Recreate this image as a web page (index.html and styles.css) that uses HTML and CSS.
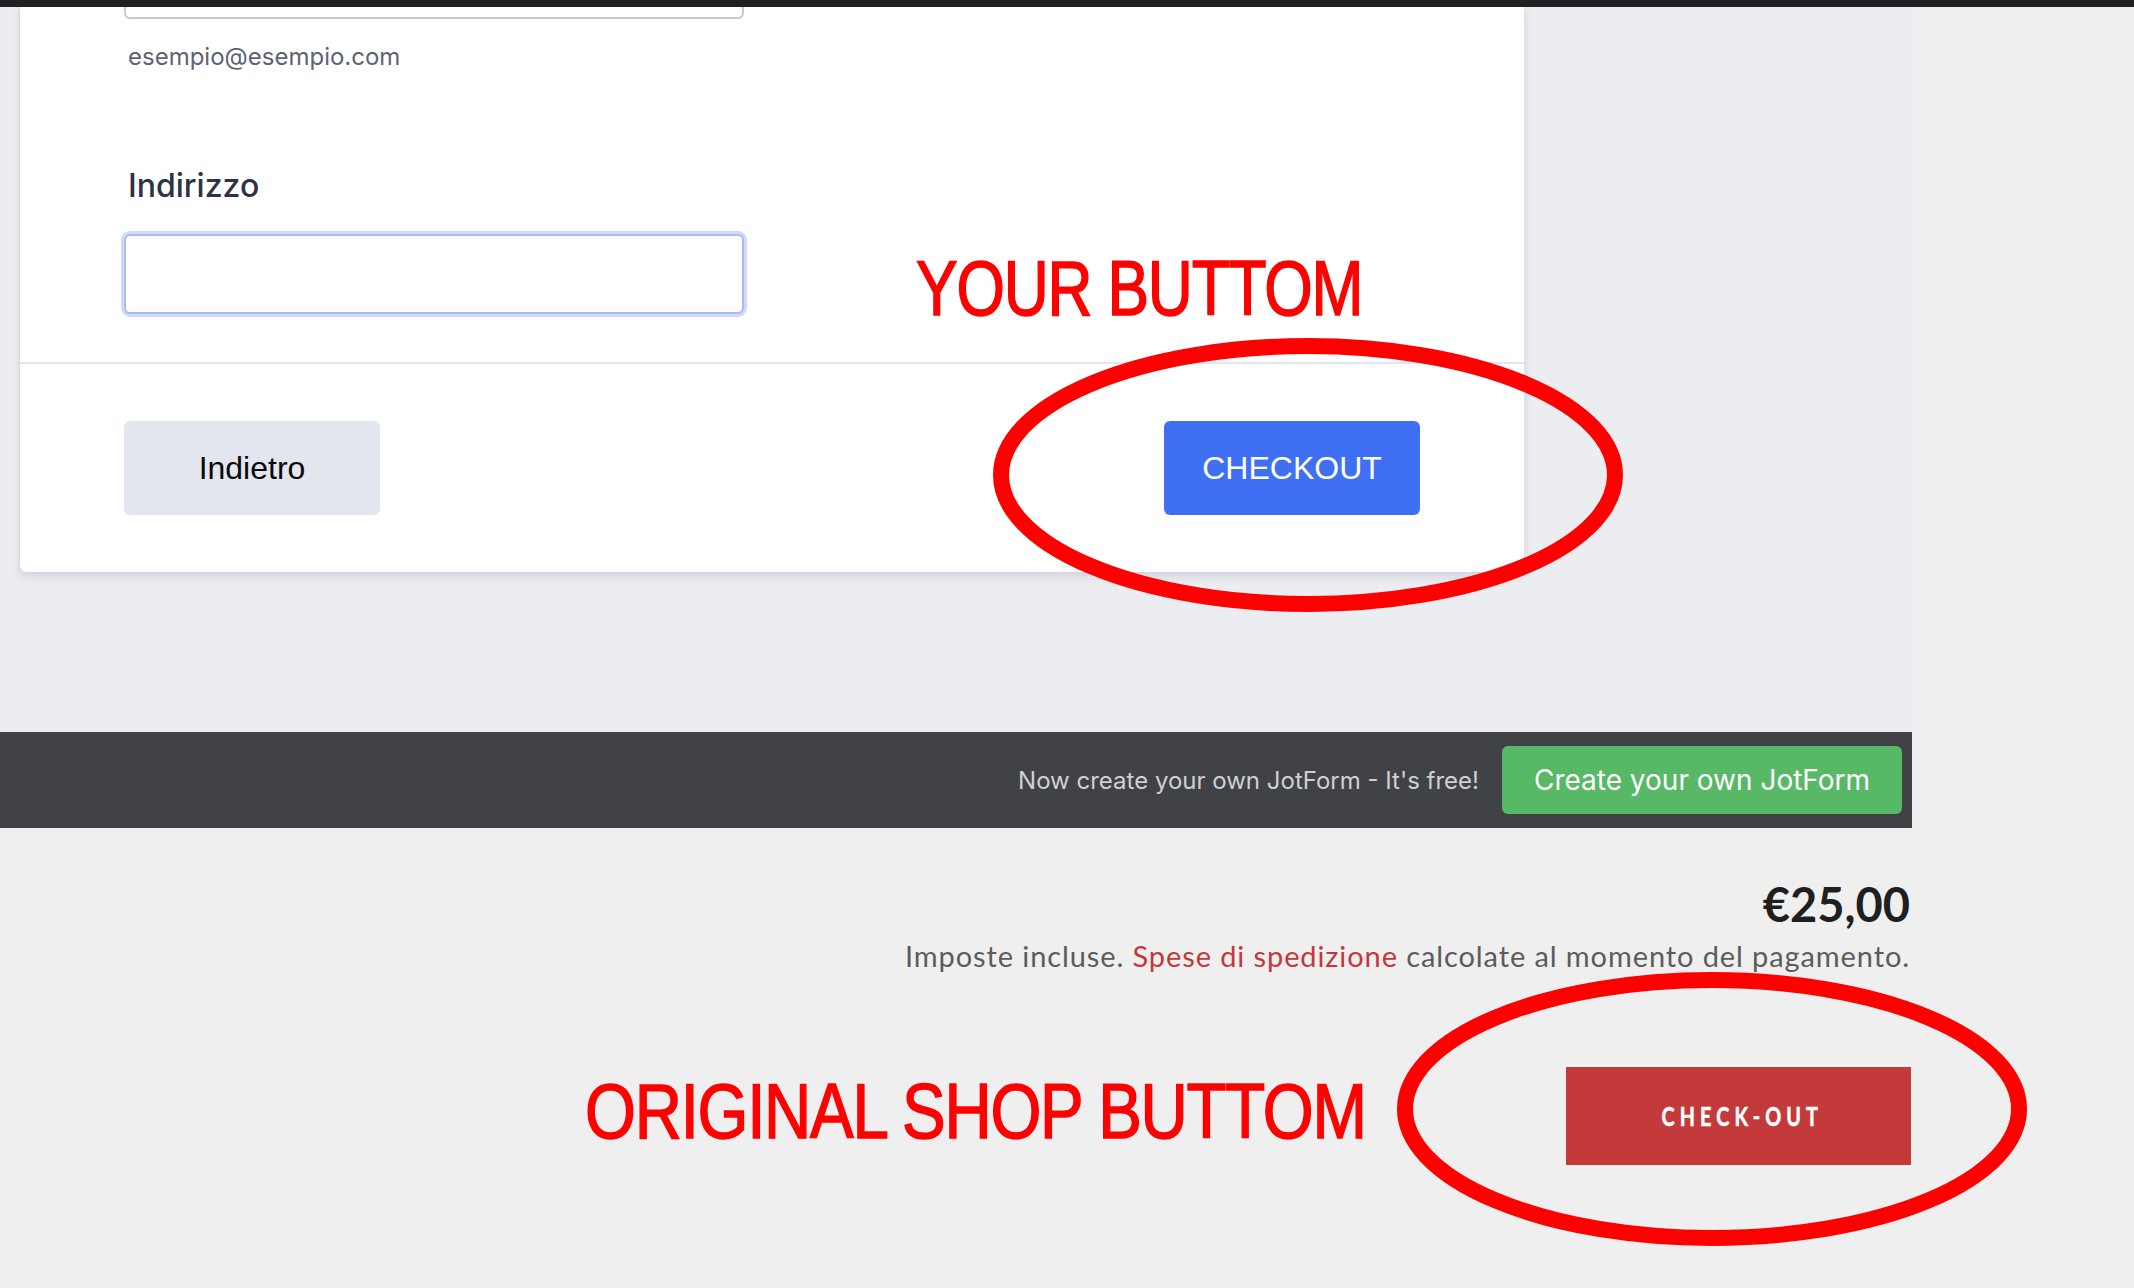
FILE: index.html
```html
<!DOCTYPE html>
<html lang="it">
<head>
<meta charset="utf-8">
<title>Checkout</title>
<link rel="stylesheet" href="styles.css">
</head>
<body>
<div class="topbar"></div>
<div class="page">
  <div class="jf">
    <div class="jf-main">
      <div class="card">
        <div class="card-body">
          <div class="input-stub"></div>
          <div class="sublabel">esempio@esempio.com</div>
          <label class="label" for="addr">Indirizzo</label>
          <input id="addr" class="field" type="text">
        </div>
        <div class="card-footer">
          <button class="btn btn-back" type="button">Indietro</button>
          <button class="btn btn-submit" type="button">CHECKOUT</button>
        </div>
      </div>
    </div>
    <div class="jf-bar">
      <span class="bar-text">Now create your own JotForm - It's free!</span>
      <a class="bar-btn">Create your own JotForm</a>
    </div>
  </div>
  <div class="shop">
    <div class="price">€25,00</div>
    <p class="tax">Imposte incluse. <a class="tax-link">Spese di spedizione</a> calcolate al momento del pagamento.</p>
    <button class="shop-btn" type="button"><span class="shop-btn-text">CHECK-OUT</span></button>
  </div>
</div>
<div class="note note-your">YOUR BUTTOM</div>
<div class="note note-orig">ORIGINAL SHOP BUTTOM</div>
<svg class="marks" width="2134" height="1288" viewBox="0 0 2134 1288" xmlns="http://www.w3.org/2000/svg">
  <ellipse cx="1308" cy="475" rx="307" ry="129" fill="none" stroke="#ff0000" stroke-width="16"/>
  <ellipse cx="1712" cy="1109" rx="307" ry="129" fill="none" stroke="#ff0000" stroke-width="16"/>
</svg>
</body>
</html>
```

FILE: styles.css
```css
html, body {
  margin: 0;
  padding: 0;
}

body {
  width: 2134px;
  height: 1288px;
  overflow: hidden;
  position: relative;
  background: #efefef;
  font-family: "Inter", "Liberation Sans", sans-serif;
}

.topbar {
  height: 7px;
  background: #212124;
}

.jf {
  width: 1912px;
  background: #ecedf1;
}

.jf-main {
  height: 725px;
  padding-left: 20px;
}

.card {
  width: 1504px;
  height: 565px;
  background: #ffffff;
  border-radius: 0 0 6px 6px;
  box-shadow: 0 4px 10px rgba(60, 70, 100, 0.16), -1px 0 2px rgba(60, 70, 100, 0.06);
}

.card-body {
  height: 355px;
  padding: 0 104px;
  border-bottom: 2px solid #e4e6ed;
}

.input-stub {
  width: 620px;
  height: 12px;
  box-sizing: border-box;
  border: 2px solid #c6c9d6;
  border-top: none;
  border-radius: 0 0 6px 6px;
}

.sublabel {
  margin: 23px 0 0 4px;
  font-size: 24px;
  line-height: 30px;
  color: #5d6275;
}

.label {
  display: block;
  margin: 94px 0 0 4px;
  font-size: 32px;
  line-height: 40px;
  font-weight: 500;
  color: #2c3345;
}

.field {
  display: block;
  margin: 28px 0 0;
  width: 620px;
  height: 80px;
  box-sizing: border-box;
  border: 2px solid #a9bcf0;
  border-radius: 6px;
  box-shadow: 0 0 0 3px #cfdaf8;
  outline: none;
  background: #ffffff;
}

.card-footer {
  height: 208px;
  padding: 0 104px;
  display: flex;
  justify-content: space-between;
  align-items: center;
}

.btn {
  width: 256px;
  height: 94px;
  border: none;
  border-radius: 6px;
  font-family: "Liberation Sans", Arial, sans-serif;
  font-size: 32px;
  padding: 0;
}

.btn-back {
  background: #e3e6ef;
  color: #0a0a0a;
}

.btn-submit {
  background: #3f70f4;
  color: #ffffff;
}

.jf-bar {
  height: 96px;
  background: #404246;
  display: flex;
  justify-content: flex-end;
  align-items: center;
  gap: 23px;
  padding-right: 10px;
}

.bar-text {
  font-size: 24px;
  color: #cfd0d4;
}

.bar-btn {
  width: 400px;
  height: 68px;
  background: #57b866;
  border-radius: 6px;
  color: #ffffff;
  font-size: 28px;
  display: flex;
  align-items: center;
  justify-content: center;
}

.shop {
  width: 1910px;
  padding-top: 48px;
  text-align: right;
  font-family: "Lato", "Liberation Sans", sans-serif;
}

.price {
  font-size: 47px;
  line-height: 56px;
  font-weight: 700;
  color: #1f1f1f;
}

.tax {
  margin: 6px 0 0;
  font-size: 29px;
  line-height: 35px;
  letter-spacing: 0.9px;
  color: #5c5c5c;
}

.tax-link {
  color: #c2393b;
}

.shop-btn {
  margin-top: 94px;
  margin-right: -1px;
  width: 345px;
  height: 98px;
  border: none;
  background: #c4393a;
  color: #ffffff;
  padding: 0;
  font-family: "Lato", "Liberation Sans", sans-serif;
}

.shop-btn-text {
  display: inline-block;
  font-size: 26px;
  font-weight: 700;
  letter-spacing: 0.26em;
  margin-right: -0.26em;
  -webkit-text-stroke: 0.6px #ffffff;
  transform: scaleX(0.76);
}

.note {
  position: absolute;
  color: #ff0000;
  font-family: "Liberation Sans", Arial, sans-serif;
  font-size: 77px;
  line-height: 1;
  letter-spacing: -1.5px;
  white-space: nowrap;
  -webkit-text-stroke: 1.5px #ff0000;
  transform-origin: left top;
}

.note-your {
  left: 916px;
  top: 250px;
  transform: scaleX(0.81);
}

.note-orig {
  left: 585px;
  top: 1073px;
  transform: scaleX(0.85);
}

.marks {
  position: absolute;
  left: 0;
  top: 0;
  pointer-events: none;
}
```
